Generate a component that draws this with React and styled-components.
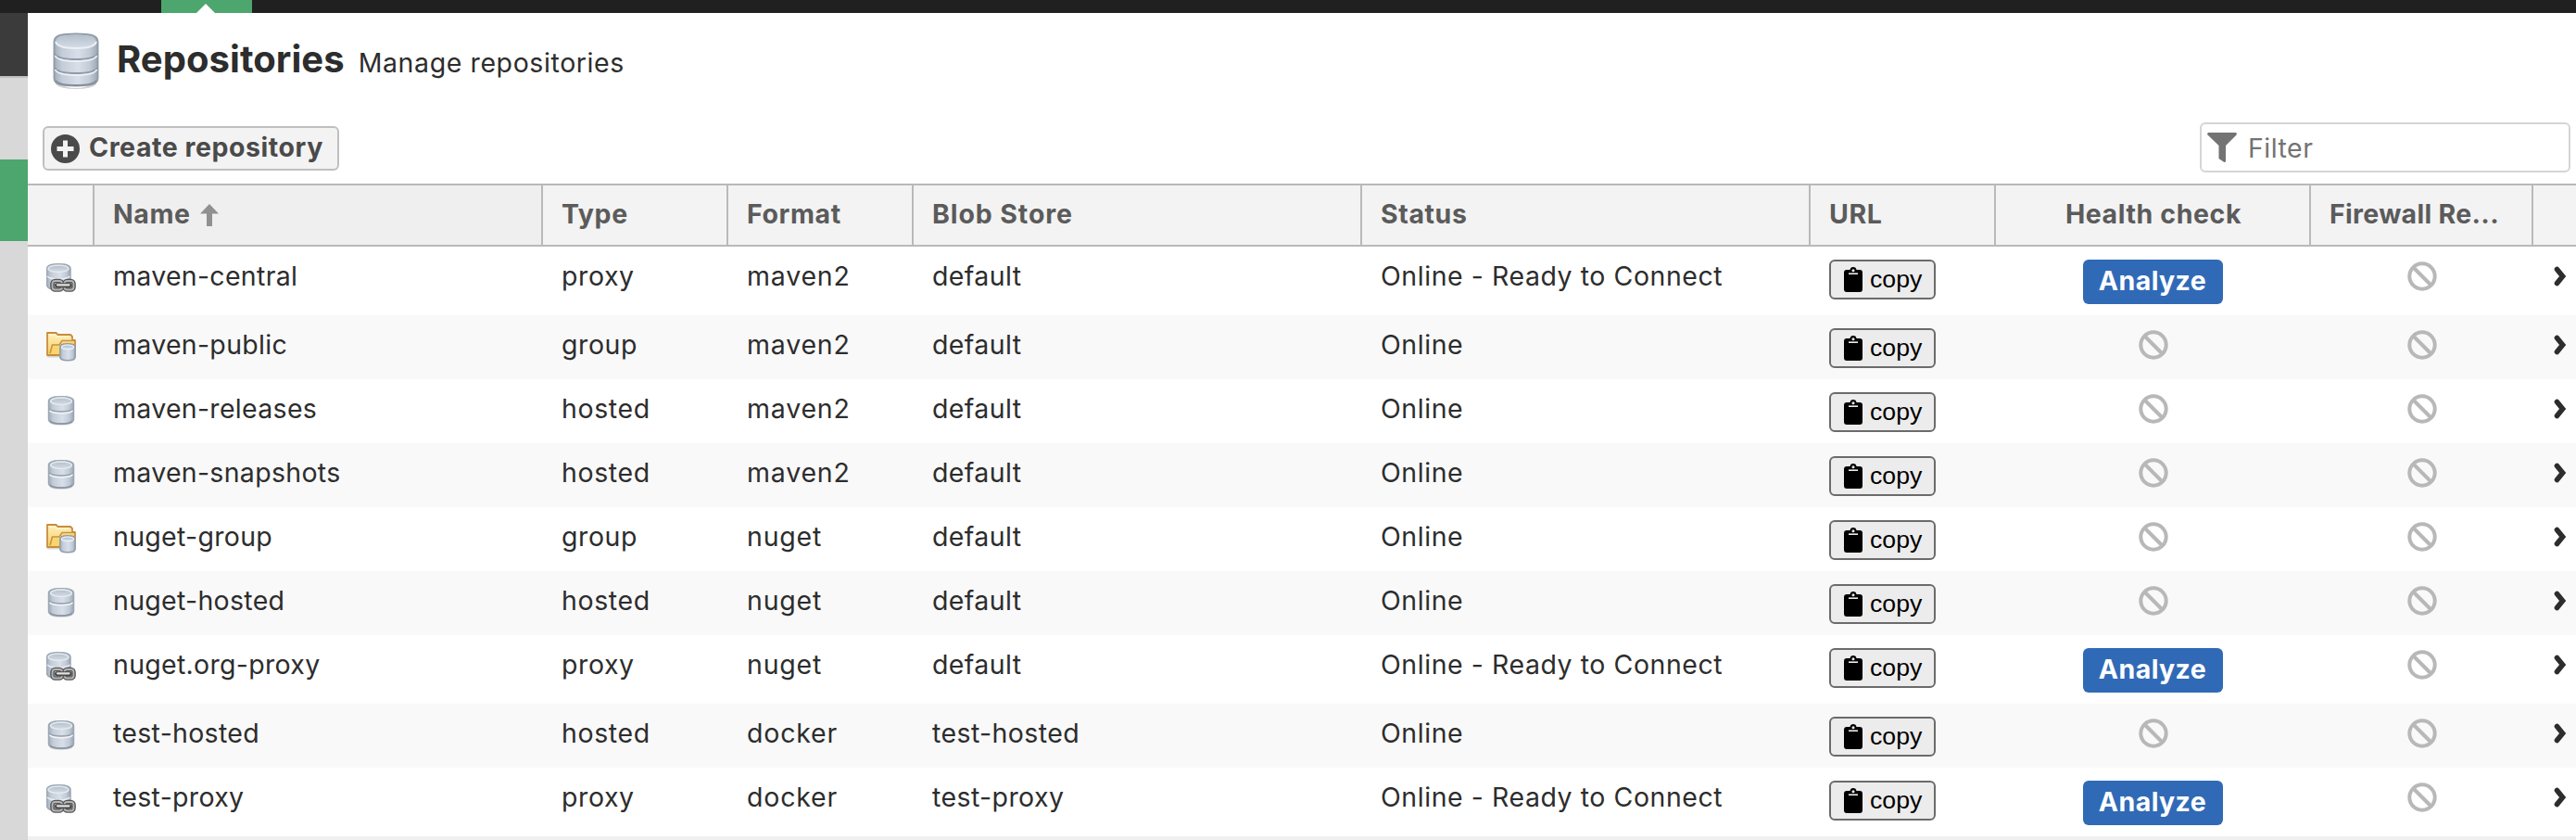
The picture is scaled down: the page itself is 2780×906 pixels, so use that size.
import React from "react";
import styled, { createGlobalStyle } from "styled-components";

const GlobalStyle = createGlobalStyle`
  *, *::before, *::after { box-sizing: border-box; }
  body {
    margin: 0;
    background: #fff;
    overflow: hidden;
  }
`;

const COLUMNS = "72px 484px 200px 200px 484px 484px 200px 340px 240px 46px";

const Page = styled.div`
  display: flex;
  flex-direction: column;
  width: 2780px;
  height: 906px;
  overflow: hidden;
  background: #fff;
  color: #2d2d2d;
  font-family: Inter, "Open Sans", sans-serif;
  font-size: 28.5px;
  letter-spacing: 0.4px;
`;

const TopBar = styled.header`
  display: flex;
  flex: none;
  height: 14px;
  padding-left: 174px;
  background: #202020;
`;

const ActiveTab = styled.div`
  display: flex;
  align-items: flex-end;
  justify-content: center;
  width: 98px;
  padding-right: 2px;
  background: #4ca66d;

  &::after {
    content: "";
    border: 10px solid transparent;
    border-top: 0;
    border-bottom: 10px solid #fff;
  }
`;

const Body = styled.div`
  display: flex;
  flex: 1;
  min-height: 0;
`;

const Sidebar = styled.nav`
  display: flex;
  flex-direction: column;
  flex: none;
  width: 30px;
  background: #d8d8d8;
`;

const SidebarTitle = styled.div`
  height: 70px;
  background: #3b3b3b;
  border-bottom: 2px solid #bfbfbf;
`;

const SidebarActive = styled.div`
  height: 88px;
  margin-top: 88px;
  background: #4ca66d;
`;

const Main = styled.main`
  flex: 1;
  min-width: 0;
  display: flex;
  flex-direction: column;
`;

const Heading = styled.div`
  display: flex;
  height: 122px;
  padding: 20px 0 0 26px;
`;

const HeadingText = styled.div`
  display: flex;
  align-items: baseline;
  gap: 15px;
  height: 60px;
  margin-left: 18px;
`;

const Title = styled.h1`
  margin: 0;
  font-size: 40px;
  line-height: 59px;
  font-weight: 700;
  letter-spacing: 0.05px;
`;

const Subtitle = styled.span`
  line-height: 40px;
  letter-spacing: 0.6px;
`;

const Toolbar = styled.div`
  display: flex;
  justify-content: space-between;
  align-items: center;
  height: 62px;
  padding: 0 6px 14px 16px;
`;

const CreateButton = styled.button`
  display: flex;
  align-items: center;
  gap: 10px;
  width: 320px;
  height: 48px;
  padding: 0 0 0 7px;
  border: 2px solid #bfbfbf;
  border-radius: 6px;
  background: #f3f3f3;
  color: #4a4a4a;
  font: inherit;
  font-weight: 700;
  letter-spacing: 0.55px;
  line-height: 40px;
  white-space: nowrap;

  span { padding-bottom: 2px; }
`;

const FilterBox = styled.label`
  display: flex;
  align-items: center;
  gap: 12px;
  width: 400px;
  height: 54px;
  margin-bottom: 2px;
  padding-left: 6px;
  border: 2px solid #d5d5d5;
  border-radius: 6px;
  color: #737373;
  letter-spacing: 0.5px;
`;

const HeaderRow = styled.div`
  display: grid;
  grid-template-columns: ${COLUMNS};
  height: 68px;
  border: solid #b9b9b9;
  border-width: 2px 0;
  background: #f3f3f3;
`;

const HeaderCell = styled.div`
  display: flex;
  align-items: flex-start;
  justify-content: ${(p) => (p.$center ? "center" : "flex-start")};
  gap: 10px;
  padding: 0 18px 0 20px;
  border-right: ${(p) => (p.$last ? "0" : "2px solid #b9b9b9")};
  background: ${(p) => (p.$sorted ? "#efefef" : "transparent")};
  color: #5b5b5b;
  font-weight: 700;
  line-height: 61px;
  letter-spacing: ${(p) => p.$spacing || "0.6px"};
  white-space: nowrap;
`;

const Row = styled.div`
  display: grid;
  grid-template-columns: ${COLUMNS};
  flex: none;
  height: ${(p) => (p.$tall ? 74 : 69)}px;
  background: ${(p) => (p.$striped ? "#f9f9f9" : "#fff")};
`;

const Cell = styled.div`
  padding: 13px 0 0 20px;
  line-height: 38px;
  letter-spacing: ${(p) => p.$spacing || "inherit"};
  white-space: nowrap;
`;

const IconCell = styled.div`
  padding: 18px 0 0 20px;
  line-height: 0;
`;

const ButtonCell = styled.div`
  display: flex;
  justify-content: ${(p) => (p.$center ? "center" : "flex-start")};
  align-items: flex-start;
  padding: ${(p) => (p.$center ? "14px 2px 0 0" : "14px 0 0 20px")};
`;

const StatusCell = styled.div`
  display: flex;
  justify-content: center;
  padding-top: 16px;
`;

const ArrowCell = styled.div`
  padding: 20px 0 0 18px;
  line-height: 0;
`;

const CopyButton = styled.button`
  display: flex;
  align-items: center;
  gap: 8px;
  width: 115px;
  height: 43px;
  padding: 0 0 1px 14px;
  border: 2px solid #6b6b6b;
  border-radius: 6px;
  background: #ececec;
  color: #000;
  font: 26.67px/30px "Liberation Sans", Arial, sans-serif;
  letter-spacing: 0;
`;

const AnalyzeButton = styled.button`
  width: 151px;
  height: 48px;
  padding: 0 0 3px;
  border: 0;
  border-radius: 6px;
  background: #306ab7;
  color: #fff;
  font: inherit;
  font-weight: 700;
  line-height: 45px;
  letter-spacing: 0.4px;
`;

const TableEnd = styled.div`
  flex: none;
  height: 4px;
  background: #f0f0f0;
`;

const SortGlyph = styled.svg`
  margin-top: 20px;
`;

const GradientDefs = styled.svg`
  display: block;
`;

const Gradients = () => (
  <GradientDefs width="0" height="0" aria-hidden="true">
    <defs>
      <linearGradient id="steel" x1="0" x2="1" y1="0" y2="0">
        <stop offset="0" stopColor="#a3aebb" />
        <stop offset="0.18" stopColor="#c3ccd8" />
        <stop offset="0.55" stopColor="#d8dfe9" />
        <stop offset="0.82" stopColor="#c1cad6" />
        <stop offset="1" stopColor="#9ca7b3" />
      </linearGradient>
      <linearGradient id="lid" x1="0" x2="0" y1="0" y2="1">
        <stop offset="0" stopColor="#b3bfcb" />
        <stop offset="1" stopColor="#d5dde6" />
      </linearGradient>
      <linearGradient id="paper" x1="0" x2="0" y1="0" y2="1">
        <stop offset="0" stopColor="#fff0bd" />
        <stop offset="1" stopColor="#f8ce62" />
      </linearGradient>
    </defs>
  </GradientDefs>
);

const LargeDatabase = () => (
  <svg width="52" height="64" viewBox="0 0 52 64">
    <path d="M4 55Q26 67 48 55V57Q43 62 26 62T4 57Z" fill="#000" opacity=".18" />
    <path d="M2.5 11C2.5 4 10 2.5 26 2.5S49.500 4 49.500 11V50C49.500 57 42 58.500 26 58.500S2.500 57 2.500 50Z" fill="url(#steel)" stroke="#929da8" strokeWidth="2" />
    <ellipse cx="26" cy="10.500" rx="21.500" ry="7" fill="url(#lid)" />
    <path d="M4 11Q6 18 26 18T48 11" fill="none" stroke="#edf1f6" strokeWidth="2" />
    <path d="M3 24Q6 30 26 30T49 24M3 39Q6 45 26 45T49 39" fill="none" stroke="#8f9ba8" strokeWidth="1.800" />
    <path d="M3.500 26Q6 32 26 32T48.500 26M3.500 41Q6 47 26 47T48.500 41" fill="none" stroke="#edf1f6" strokeWidth="1.800" />
    <path d="M4 53Q8 58 26 58T48 53" fill="none" stroke="#84909c" strokeWidth="2" />
  </svg>
);

const DatabaseIcon = () => (
  <svg width="32" height="32" viewBox="0 0 32 32">
    <path d="M4 28Q16 34 28 28V30Q23 32 16 32T4 30Z" fill="#000" opacity=".12" />
    <path d="M2.500 6C2.500 2 7 .8 16 .8S29.500 2 29.500 6V25C29.500 29 25 30.300 16 30.300S2.500 29 2.500 25Z" fill="url(#steel)" stroke="#9aa7b2" strokeWidth="1.500" />
    <ellipse cx="16" cy="5.800" rx="11.500" ry="3.800" fill="url(#lid)" stroke="#e6ebf1" strokeWidth="1.300" />
    <path d="M3 14Q6 17 16 17T29 14" fill="none" stroke="#94a0ad" strokeWidth="1.500" />
    <path d="M3.500 15.800Q6 18.800 16 18.800T28.500 15.800" fill="none" stroke="#f2f5f8" strokeWidth="1.500" />
    <path d="M4 27Q7 30 16 30T28 27" fill="none" stroke="#8794a0" strokeWidth="1.300" />
  </svg>
);

const ProxyIcon = () => (
  <svg width="32" height="32" viewBox="0 0 32 32">
    <path d="M.5 6C.5 2 5 .8 13 .8S26 2 26 6V23C26 27 21 28.500 13 28.500S.5 27 .5 23Z" fill="url(#steel)" stroke="#9aa7b2" strokeWidth="1.500" />
    <ellipse cx="13" cy="5.800" rx="11" ry="3.700" fill="url(#lid)" stroke="#e6ebf1" strokeWidth="1.300" />
    <path d="M1 14Q4 17 13 17T25.500 14" fill="none" stroke="#e9eef3" strokeWidth="1.500" />
    <rect x="6.500" y="19" width="10.500" height="9.500" rx="3" fill="none" stroke="#555" strokeWidth="4.600" />
    <rect x="19.500" y="19" width="10" height="9.500" rx="3" fill="none" stroke="#555" strokeWidth="4.600" />
    <rect x="6.500" y="19" width="10.500" height="9.500" rx="3" fill="none" stroke="#b4b4b4" strokeWidth="1.800" />
    <rect x="19.500" y="19" width="10" height="9.500" rx="3" fill="none" stroke="#b4b4b4" strokeWidth="1.800" />
    <path d="M11.500 23.700H25" stroke="#484848" strokeWidth="5" strokeLinecap="round" />
    <path d="M12 23.300H24.500" stroke="#e2e2e2" strokeWidth="2.200" strokeLinecap="round" />
  </svg>
);

const GroupIcon = () => (
  <svg width="32" height="32" viewBox="0 0 32 32">
    <path d="M1 26H16V27.500H1Z" fill="#000" opacity=".15" />
    <path d="M1 1H10.500L12.500 3H26L28 5V9H31V16H16V25H1Z" fill="url(#paper)" stroke="#c78d3d" strokeWidth="1.800" strokeLinejoin="round" />
    <path d="M4 23L6.500 14H14L17 9.500H30" fill="none" stroke="#cb9140" strokeWidth="1.600" />
    <path d="M5.500 23.500L8 15.500H15L18 11.300H30V16H16V24Z" fill="#fbd56c" />
    <path d="M3 3H9.500L11.500 5H25" fill="none" stroke="#fff5d2" strokeWidth="1.300" />
    <path d="M14.800 16.500C14.800 13.500 18 12.800 23 12.800S31.200 13.500 31.200 16.500V27C31.200 30 28 30.800 23 30.800S14.800 30 14.800 27Z" fill="url(#steel)" stroke="#8f9eaa" strokeWidth="1.500" />
    <ellipse cx="23" cy="16.300" rx="6.600" ry="2.300" fill="url(#lid)" stroke="#edf2f6" strokeWidth="1.200" />
  </svg>
);

const PlusIcon = () => (
  <svg width="31" height="31" viewBox="0 0 31 31">
    <circle cx="15.500" cy="15.500" r="15.500" fill="#4a4a4a" />
    <path d="M15.500 6.500V24.500M6.500 15.500H24.500" stroke="#f3f3f3" strokeWidth="5" />
  </svg>
);

const FunnelIcon = () => (
  <svg width="32" height="32" viewBox="0 0 32 32">
    <path d="M1 0H31Q32.500 1 31.500 2.500L20 14V31Q19 32.500 18 31.800L12.500 28V14L.5 2.500Q-.5 1 1 0Z" fill="#737373" />
  </svg>
);

const SortArrow = () => (
  <SortGlyph width="20" height="24" viewBox="0 0 20 24">
    <path d="M10 0L20 10.500H13V24H7V10.500H0Z" fill="#909090" />
  </SortGlyph>
);

const ClipboardIcon = () => (
  <svg width="20" height="27" viewBox="0 0 20 27">
    <path d="M3 3H6.500Q7 0 10 0T13.500 3H17Q20 3 20 6V24Q20 27 17 27H3Q0 27 0 24V6Q0 3 3 3Z" fill="#000" />
    <circle cx="10" cy="3.800" r="1.500" fill="#ececec" />
    <path d="M5 7.200H15" stroke="#ececec" strokeWidth="1.600" />
  </svg>
);

const BanIcon = () => (
  <svg width="32" height="32" viewBox="0 0 32 32">
    <circle cx="16" cy="16" r="13.700" fill="none" stroke="#b8b8b8" strokeWidth="4" />
    <path d="M6.500 6.500L25.500 25.500" stroke="#b8b8b8" strokeWidth="4" />
  </svg>
);

const ChevronIcon = () => (
  <svg width="18" height="24" viewBox="0 0 18 24">
    <path d="M7.500 4.500L13.600 12L7.500 19.500" fill="none" stroke="#2d2d2d" strokeWidth="5.600" strokeLinecap="round" />
  </svg>
);

const TYPE_ICONS = { proxy: ProxyIcon, group: GroupIcon, hosted: DatabaseIcon };

const REPOSITORIES = [
  { name: "maven-central", type: "proxy", format: "maven2", store: "default" },
  { name: "maven-public", type: "group", format: "maven2", store: "default" },
  { name: "maven-releases", type: "hosted", format: "maven2", store: "default" },
  { name: "maven-snapshots", type: "hosted", format: "maven2", store: "default" },
  { name: "nuget-group", type: "group", format: "nuget", store: "default" },
  { name: "nuget-hosted", type: "hosted", format: "nuget", store: "default" },
  { name: "nuget.org-proxy", type: "proxy", format: "nuget", store: "default" },
  { name: "test-hosted", type: "hosted", format: "docker", store: "test-hosted" },
  { name: "test-proxy", type: "proxy", format: "docker", store: "test-proxy" },
];

function RepositoryRow({ repo, striped }) {
  const TypeIcon = TYPE_ICONS[repo.type];
  const isProxy = repo.type === "proxy";
  return (
    <Row $tall={isProxy} $striped={striped}>
      <IconCell><TypeIcon /></IconCell>
      <Cell $spacing="0.3px">{repo.name}</Cell>
      <Cell $spacing="0.6px">{repo.type}</Cell>
      <Cell $spacing="0.8px">{repo.format}</Cell>
      <Cell>{repo.store}</Cell>
      <Cell $spacing="0.55px">{isProxy ? "Online - Ready to Connect" : "Online"}</Cell>
      <ButtonCell>
        <CopyButton><ClipboardIcon />copy</CopyButton>
      </ButtonCell>
      {isProxy ? (
        <ButtonCell $center><AnalyzeButton>Analyze</AnalyzeButton></ButtonCell>
      ) : (
        <StatusCell><BanIcon /></StatusCell>
      )}
      <StatusCell><BanIcon /></StatusCell>
      <ArrowCell><ChevronIcon /></ArrowCell>
    </Row>
  );
}

export default function App() {
  return (
    <Page>
      <GlobalStyle />
      <Gradients />
      <TopBar><ActiveTab /></TopBar>
      <Body>
        <Sidebar>
          <SidebarTitle />
          <SidebarActive />
        </Sidebar>
        <Main>
          <Heading>
            <LargeDatabase />
            <HeadingText>
              <Title>Repositories</Title>
              <Subtitle>Manage repositories</Subtitle>
            </HeadingText>
          </Heading>
          <Toolbar>
            <CreateButton><PlusIcon /><span>Create repository</span></CreateButton>
            <FilterBox><FunnelIcon />Filter</FilterBox>
          </Toolbar>
          <HeaderRow>
            <HeaderCell />
            <HeaderCell $sorted>Name<SortArrow /></HeaderCell>
            <HeaderCell>Type</HeaderCell>
            <HeaderCell>Format</HeaderCell>
            <HeaderCell $spacing="0.9px">Blob Store</HeaderCell>
            <HeaderCell>Status</HeaderCell>
            <HeaderCell>URL</HeaderCell>
            <HeaderCell $center>Health check</HeaderCell>
            <HeaderCell $spacing="0.3px">Firewall Re...</HeaderCell>
            <HeaderCell $last />
          </HeaderRow>
          {REPOSITORIES.map((repo, i) => (
            <RepositoryRow key={repo.name} repo={repo} striped={i % 2 === 1} />
          ))}
          <TableEnd />
        </Main>
      </Body>
    </Page>
  );
}
